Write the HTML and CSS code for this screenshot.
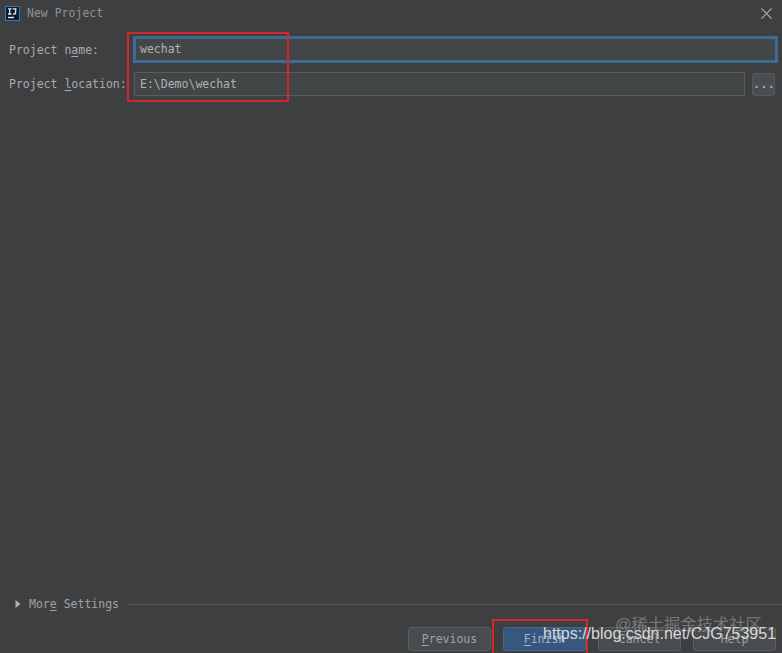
FILE: index.html
```html
<!DOCTYPE html>
<html lang="en">
<head>
<meta charset="utf-8">
<title>New Project</title>
<link rel="stylesheet" href="styles.css">
</head>
<body>
<div class="dialog">
  <header class="titlebar">
    <svg class="logo" width="15" height="15" viewBox="0 0 15 15">
      <rect x="0.5" y="0.5" width="14" height="14" fill="#0c1a2b" stroke="#2f79c4"/>
      <path d="M3 2.8h3.4M4.7 2.8v5.2M3 8h3.4M7.6 2.8h4M10.6 2.8v4.2q0 1-1 1H8" fill="none" stroke="#e8e8e8" stroke-width="1.3"/>
      <rect x="3" y="10.8" width="6" height="1.4" fill="#e8e8e8"/>
    </svg>
    <span class="title">New Project</span>
    <svg class="close" width="11" height="11" viewBox="0 0 11 11">
      <path d="M0.5 0.5l10 10M10.5 0.5l-10 10" stroke="#a9abad" stroke-width="1.1" fill="none"/>
    </svg>
  </header>
  <div class="form">
    <div class="row row-name">
      <label class="label">Project n<u>a</u>me:</label>
      <div class="input input-focus">wechat</div>
    </div>
    <div class="row row-location">
      <label class="label">Project <u>l</u>ocation:</label>
      <div class="input">E:\Demo\wechat</div>
      <button class="browse">...</button>
    </div>
  </div>
  <div class="more">
    <svg class="arrow" width="6" height="10" viewBox="0 0 6 10"><path d="M0.5 1v8L5.5 5z" fill="#afb1b3"/></svg>
    <span class="more-label">Mor<u>e</u> Settings</span>
    <span class="more-line"></span>
  </div>
  <footer class="buttons">
    <button class="btn"><u>P</u>revious</button>
    <button class="btn btn-primary"><u>F</u>inish</button>
    <button class="btn">Cancel</button>
    <button class="btn">Help</button>
  </footer>
</div>
<div class="mark mark-top"></div>
<div class="mark mark-bottom"></div>
<div class="wm wm-cn">@稀土掘金技术社区</div>
<div class="wm wm-url">https://blog.csdn.net/CJG753951</div>
</body>
</html>
```
FILE: styles.css
```css
* { box-sizing: border-box; }
html, body { margin: 0; height: 100%; overflow: hidden; }
body { background: #3e3f41; position: relative; }
.dialog {
  height: 653px;
  display: flex;
  flex-direction: column;
  font: 11.5px "DejaVu Sans Mono", "Liberation Mono", monospace;
  color: #a9abad;
}
u { text-underline-offset: 2px; }
.titlebar {
  height: 27px;
  flex: none;
  display: flex;
  align-items: center;
  padding: 0 10px 1px 5px;
}
.logo { flex: none; }
.title { margin-left: 7px; color: #8f9193; }
.close { margin-left: auto; }
.form {
  flex: 1;
  padding: 9px 4px 0 9px;
  display: flex;
  flex-direction: column;
  gap: 9px;
}
.row { display: flex; align-items: center; }
.label { width: 125px; flex: none; white-space: nowrap; }
.input {
  height: 24px;
  flex: 1;
  background: #434647;
  border: 1px solid #5a5c5d;
  padding: 0 5px;
  line-height: 22px;
  color: #b0b2b4;
}
.input-focus {
  height: 27px;
  margin-left: -1px;
  border: 3px solid #3f6a94;
  padding: 0 4px;
  line-height: 21px;
}
.row-location .input { flex: none; width: 611px; }
.row-location { padding-right: 3px; }
.browse {
  width: 23px;
  height: 23px;
  margin-left: 7px;
  background: #4b4e50;
  border: 1px solid #595b5d;
  border-radius: 3px;
  padding: 0;
  font: inherit;
  font-weight: bold;
  letter-spacing: 0.5px;
  color: #a9abad;
}
.more {
  height: 18px;
  flex: none;
  display: flex;
  align-items: center;
  padding-left: 15px;
}
.arrow { flex: none; }
.more-label { margin-left: 8px; color: #a0a2a4; white-space: nowrap; }
.more-line { flex: 1; height: 1px; margin-left: 8px; background: #525456; }
.buttons {
  flex: none;
  display: flex;
  justify-content: flex-end;
  gap: 12px;
  padding: 14px 6px 2px 0;
}
.btn {
  width: 83px;
  height: 24px;
  padding: 0;
  background: #494c4e;
  border: 1px solid #5c5e60;
  border-radius: 3px;
  font: inherit;
  color: #a0a2a4;
}
.btn-primary { background: #365880; border-color: #42688f; color: #a9b4c0; }
.mark {
  position: absolute;
  border: 2px solid #d3262e;
}
.mark-top { left: 127px; top: 32px; width: 162px; height: 70px; }
.mark-bottom { left: 492px; top: 619px; width: 96px; height: 40px; }
.wm { position: absolute; white-space: nowrap; font-family: "Liberation Sans", "Noto Sans CJK SC", sans-serif; }
.wm-cn { left: 615px; top: 612px; font-size: 16.3px; line-height: 24px; color: rgba(255, 255, 255, 0.3); }
.wm-url { left: 543px; top: 624px; font-size: 16px; line-height: 20px; color: #d8d8d8; }
```
